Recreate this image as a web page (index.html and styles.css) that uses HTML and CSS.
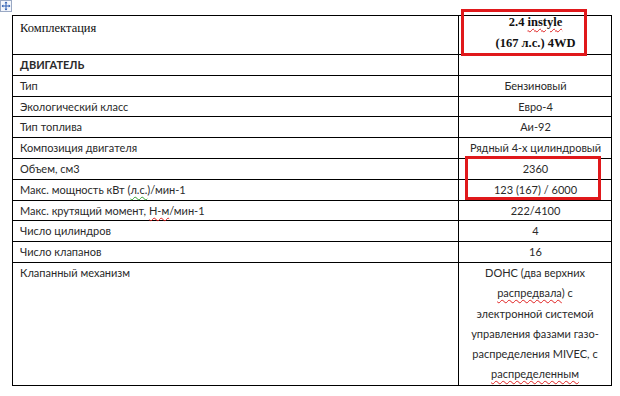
FILE: index.html
```html
<!DOCTYPE html>
<html lang="ru">
<head>
<meta charset="utf-8">
<title>Комплектация</title>
<link rel="stylesheet" href="styles.css">
</head>
<body>
<div class="page">
  <div class="move-handle">
    <svg width="10" height="10" viewBox="0 0 10 10">
      <path d="M5 1 V9 M1 5 H9" stroke="#2f5fb3" stroke-width="1" fill="none"/>
      <path d="M5 0.5 L3.5 2.3 H6.5 Z M5 9.5 L3.5 7.7 H6.5 Z M0.5 5 L2.3 3.5 V6.5 Z M9.5 5 L7.7 3.5 V6.5 Z" fill="#2f5fb3"/>
    </svg>
  </div>
  <table class="spec">
    <colgroup><col class="c1"><col class="c2"></colgroup>
    <tr class="head">
      <td class="serif label">Комплектация</td>
      <td class="serif bold center"><div class="headval">2.4 <span class="spell">instyle</span><br>(167 л.с.) 4WD</div></td>
    </tr>
    <tr><td class="bold">ДВИГАТЕЛЬ</td><td></td></tr>
    <tr><td>Тип</td><td class="center">Бензиновый</td></tr>
    <tr><td>Экологический класс</td><td class="center">Евро-4</td></tr>
    <tr><td>Тип топлива</td><td class="center">Аи-92</td></tr>
    <tr><td>Композиция двигателя</td><td class="center">Рядный 4-х цилиндровый</td></tr>
    <tr><td>Объем, см3</td><td class="center">2360</td></tr>
    <tr><td>Макс. мощность кВт (<span class="gram">л.с.</span>)/мин-1</td><td class="center">123 (167) / 6000</td></tr>
    <tr><td>Макс. крутящий момент, <span class="spell">Н-м</span>/мин-1</td><td class="center">222/4100</td></tr>
    <tr><td>Число цилиндров</td><td class="center">4</td></tr>
    <tr><td>Число клапанов</td><td class="center">16</td></tr>
    <tr class="last"><td>Клапанный механизм</td><td class="center multi">DOHC (два верхних <span class="spell">распредвала</span>) с электронной системой управления фазами газо-распределения MIVEC, с <span class="spell">распределенным</span></td></tr>
  </table>
  <div class="mark mark-head"></div>
  <div class="mark mark-power"></div>
</div>
</body>
</html>
```
FILE: styles.css
```css
html, body {
  margin: 0;
  padding: 0;
  background: #fff;
}
.page {
  position: relative;
  width: 620px;
  height: 396px;
  overflow: hidden;
  padding: 15px 0 0 12px;
  box-sizing: border-box;
  font-family: "Lato", "Open Sans", sans-serif;
  font-size: 11px;
  color: #2a2a2a;
}
.move-handle {
  position: absolute;
  left: 0;
  top: 0;
  width: 10px;
  height: 10px;
  border: 1px solid #9aa9c4;
  background: #f4f7fc;
  display: flex;
  align-items: center;
  justify-content: center;
}
.spec {
  border-collapse: collapse;
  table-layout: fixed;
  width: 599px;
}
.c1 { width: 446px; }
.c2 { width: 153px; }
.spec td {
  border: 1px solid #000;
  padding: 0 6px 0 7px;
  line-height: 19.8px;
  vertical-align: middle;
  white-space: nowrap;
}
.spec tr.head td {
  height: 36px;
  vertical-align: top;
  line-height: 21px;
}
.spec tr.head td.label {
  padding-top: 2px;
}
.serif {
  font-family: "Liberation Serif", serif;
  font-size: 12.5px;
  color: #111;
}
.bold { font-weight: bold; }
.center { text-align: center; }
.headval {
  margin-top: -4px;
  line-height: 21px;
}
.spell {
  text-decoration: underline wavy #e02020;
  text-decoration-thickness: 1px;
  text-underline-offset: 2px;
}
.gram {
  text-decoration: underline wavy #2fa02f;
  text-decoration-thickness: 1px;
  text-underline-offset: 2px;
}
.spec tr.last td {
  vertical-align: top;
}
.spec td.multi {
  white-space: normal;
  line-height: 20.3px;
  padding: 0 6px;
}
.mark {
  position: absolute;
  border: 3px solid #e0181b;
  box-sizing: border-box;
}
.mark-head {
  left: 461px;
  top: 9px;
  width: 126px;
  height: 47px;
}
.mark-power {
  left: 465px;
  top: 156px;
  width: 136px;
  height: 44px;
}
```
